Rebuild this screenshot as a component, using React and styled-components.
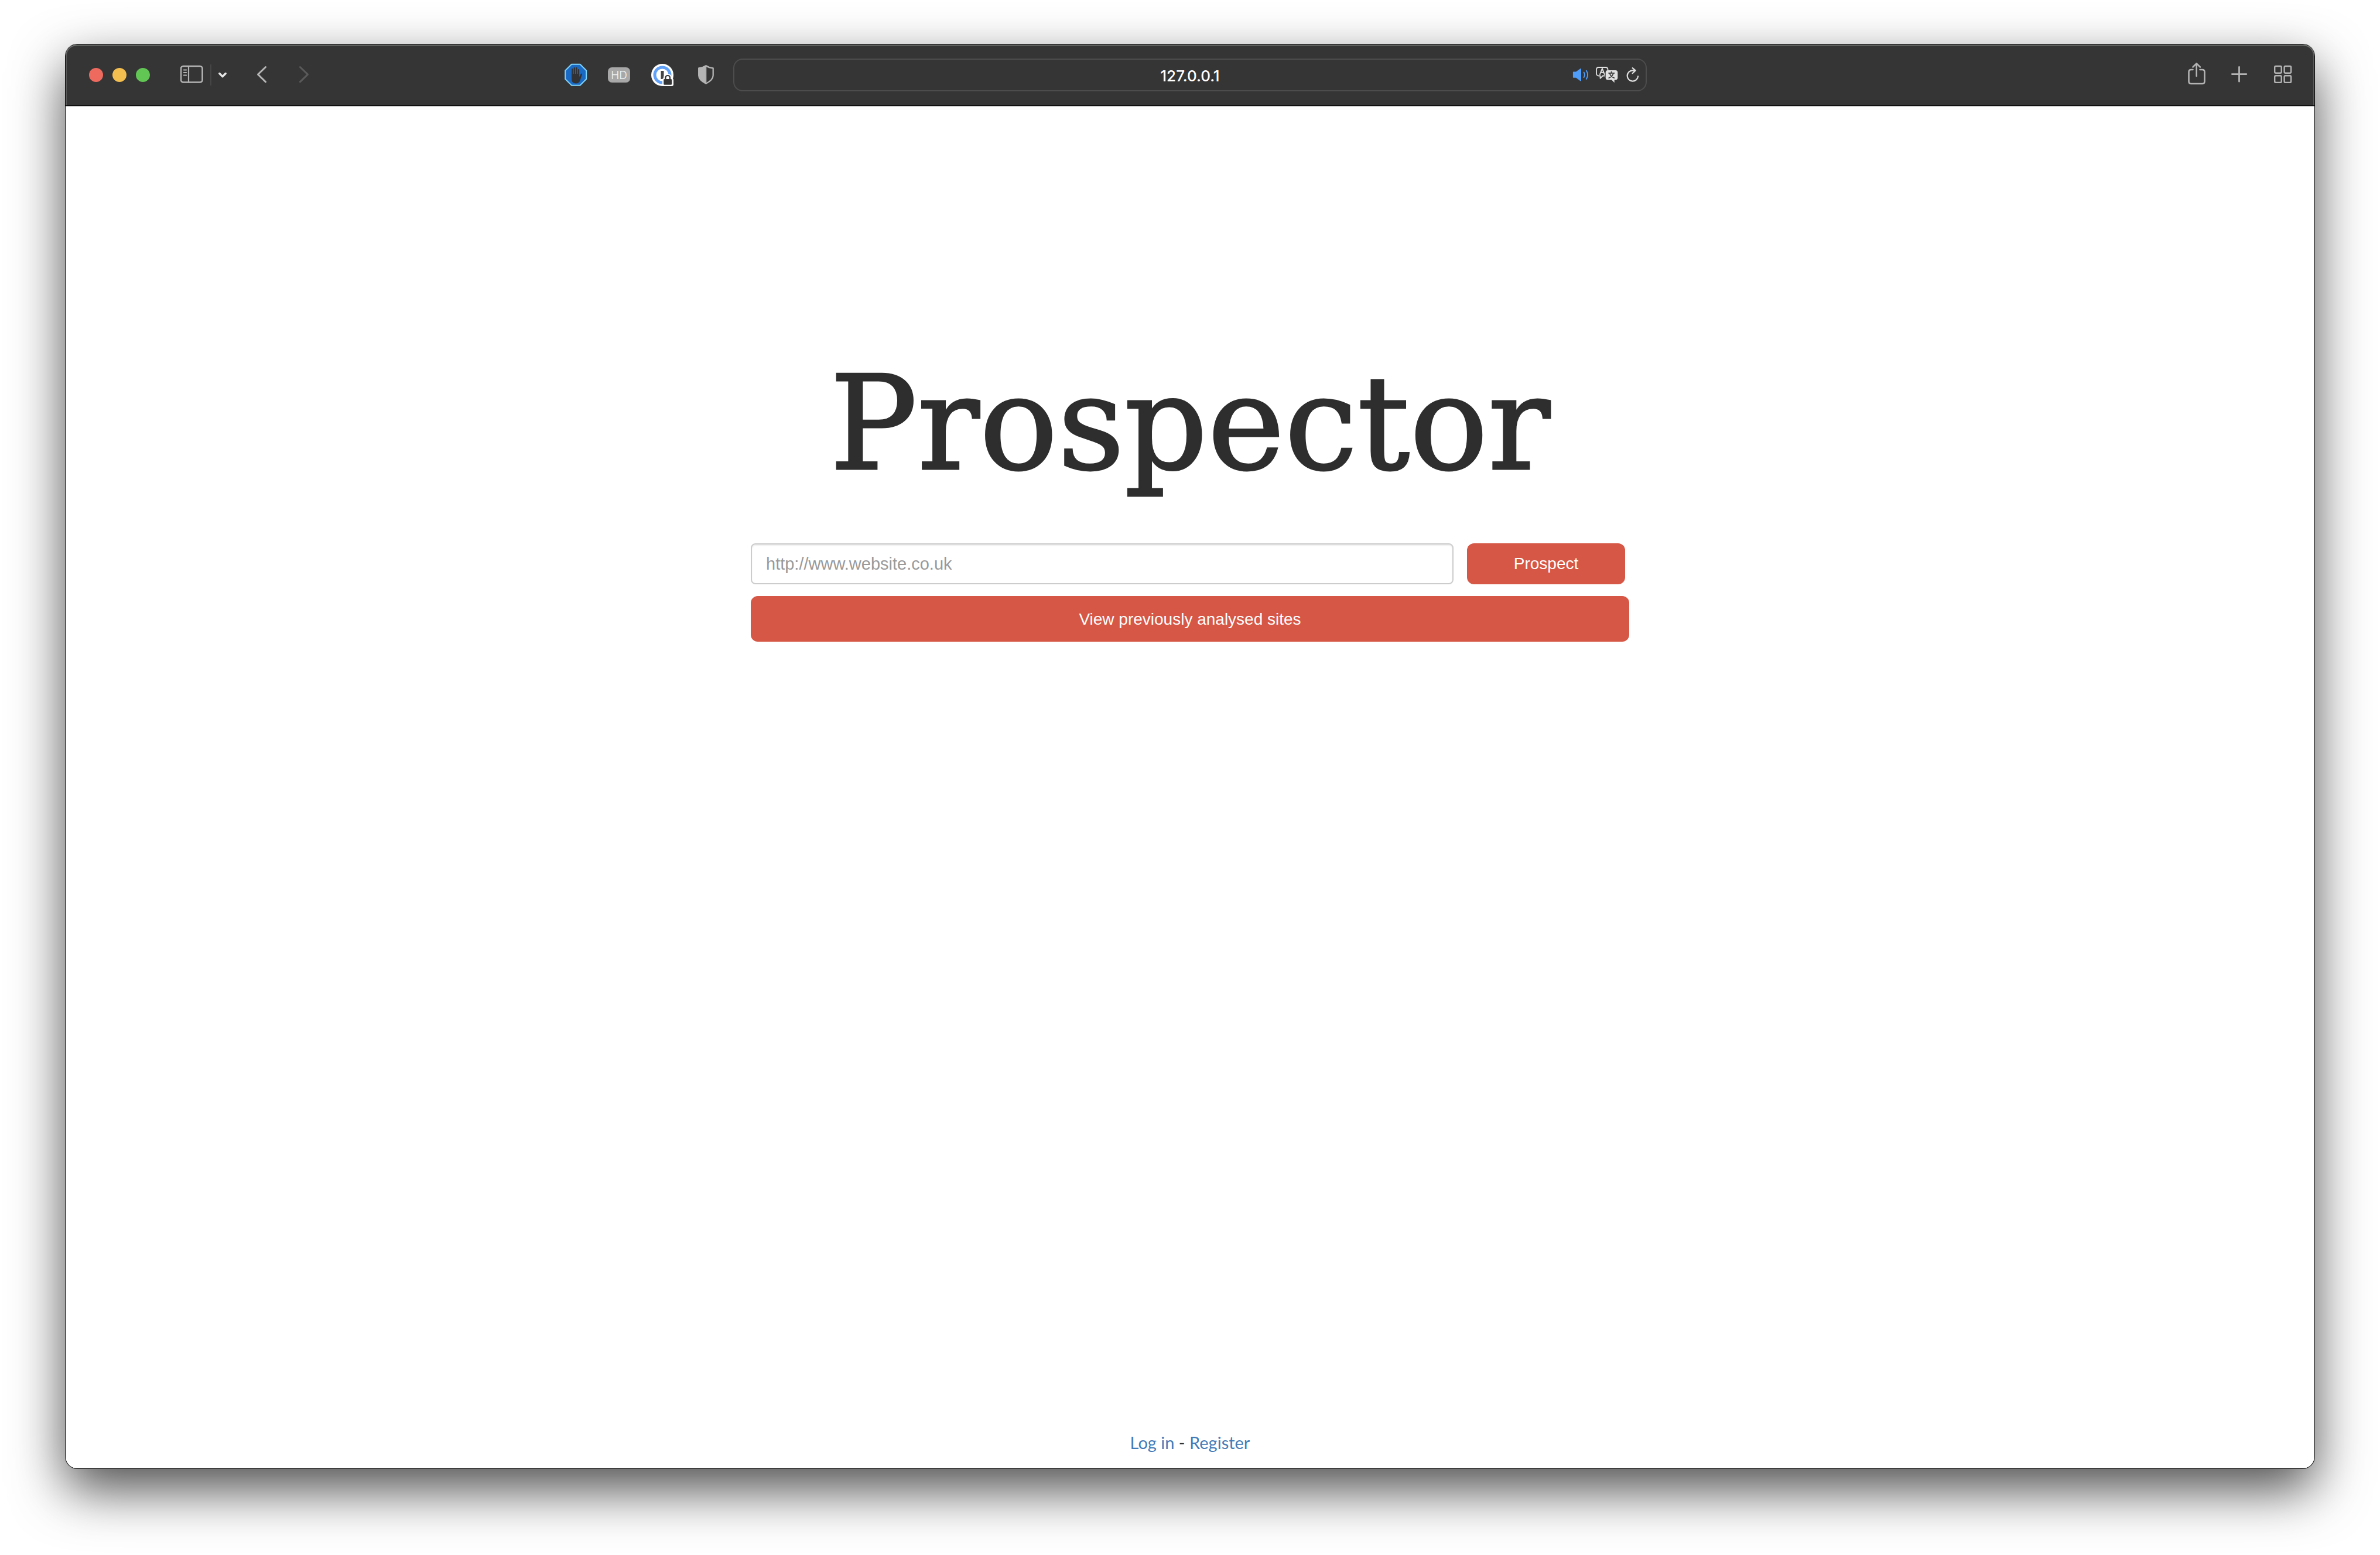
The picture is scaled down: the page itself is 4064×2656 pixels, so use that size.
import React from "react";
import styled, { createGlobalStyle } from "styled-components";

const GlobalStyle = createGlobalStyle`
  *, *::before, *::after { box-sizing: border-box; }
  body { margin: 0; background: #fff; }
`;

const sans = '"Liberation Sans", Arial, sans-serif';

const Desktop = styled.div`
  display: flex;
  min-height: 100vh;
  padding: 76px 112px 148px;
`;

const BrowserWindow = styled.div`
  flex: 1;
  display: flex;
  flex-direction: column;
  border-radius: 20px;
  background: #fff;
  box-shadow: 0 0 0 1px #000, 0 36px 90px rgba(0, 0, 0, 0.7);
`;

const Toolbar = styled.header`
  display: grid;
  grid-template-columns: 1fr minmax(0, 1560px) 1fr;
  align-items: center;
  height: 105px;
  border-bottom: 1px solid #000;
  border-radius: 20px 20px 0 0;
  background: #353535;
  box-shadow: inset 0 2px 0 #6c6e6c, inset 2px 0 0 #5c5c5c, inset -2px 0 0 #5c5c5c;
`;

const ToolbarStart = styled.div`
  display: flex;
  align-items: center;
  justify-content: space-between;
  padding: 0 27px 0 40px;
`;

const ToolbarEnd = styled.div`
  display: flex;
  justify-content: flex-end;
  gap: 34px;
  padding-right: 34px;
`;

const Group = styled.div`
  display: flex;
  align-items: center;
  gap: ${(p) => p.$gap}px;
`;

const WindowButton = styled.button`
  width: 24px;
  height: 24px;
  padding: 0;
  border: 0;
  border-radius: 50%;
  background: ${(p) => p.$color};
`;

const ToolButton = styled.button`
  display: flex;
  width: ${(p) => p.$width || 40}px;
  height: 48px;
  padding: 0;
  border: 0;
  background: none;
  color: ${(p) => p.$color || "#b4b4b4"};
`;

const Divider = styled.span`
  width: 2px;
  height: 36px;
  background: #464646;
`;

const AddressBar = styled.div`
  display: grid;
  grid-template-columns: 1fr 2fr 1fr;
  align-items: center;
  height: 56px;
  padding: 0 10px;
  border: 2px solid #4d4d4d;
  border-radius: 16px;
`;

const AddressInput = styled.input`
  grid-column: 2;
  width: 100%;
  padding: 4px 0 0;
  border: 0;
  outline: 0;
  background: none;
  color: #fff;
  font: 500 26px/32px Inter, sans-serif;
  text-align: center;
`;

const AddressActions = styled.div`
  display: flex;
  justify-content: flex-end;
  gap: 12px;
`;

const Page = styled.div`
  flex: 1;
  display: flex;
  flex-direction: column;
  align-items: center;
  justify-content: space-between;
  padding: 431px 40px 26px;
  border-top: 1px solid #b8b8b8;
  border-radius: 0 0 20px 20px;
`;

const Main = styled.main`
  display: flex;
  flex-direction: column;
  align-items: center;
  width: 100%;
`;

const Title = styled.h1`
  margin: 0 0 93px;
  color: #2e2e2e;
  font: 400 222px/222px "DejaVu Serif", serif;
  -webkit-text-stroke: 3px #2e2e2e;
`;

const SearchForm = styled.form`
  display: grid;
  grid-template-columns: 80% 18%;
  gap: 23px;
  width: 100%;
  max-width: 1500px;
`;

const UrlInput = styled.input`
  height: 70px;
  padding: 0 24px;
  border: 2px solid #ccc;
  border-radius: 8px;
  outline: 0;
  background: #fff;
  box-shadow: inset 0 2px 2px rgba(0, 0, 0, 0.075);
  font: 29px/40px ${sans};
  color: #555;

  &::placeholder {
    color: #999;
    opacity: 1;
  }
`;

const ActionButton = styled.button`
  height: 70px;
  padding: 0 24px;
  border: 0;
  border-radius: 12px;
  background: #d65745;
  color: #fff;
  font: 28px/40px ${sans};
`;

const WideButton = styled(ActionButton)`
  width: 100%;
  max-width: 1500px;
  height: 78px;
  margin-top: 20px;
  padding-top: 2px;
`;

const Footer = styled.footer`
  color: #333;
  font: 400 29px/36px Lato, sans-serif;
`;

const FooterLink = styled.a`
  color: #437bb8;
  text-decoration: none;
`;

const Icon = ({ width = 40, children, ...rest }) => (
  <svg
    width={width}
    height="48"
    viewBox={`0 0 ${width} 48`}
    fill="none"
    stroke="currentColor"
    strokeWidth="2.6"
    strokeLinecap="round"
    strokeLinejoin="round"
    aria-hidden="true"
    {...rest}
  >
    {children}
  </svg>
);

const SidebarIcon = () => (
  <Icon>
    <rect x="1" y="9" width="36.5" height="27.5" rx="4" />
    <path d="M14 9v27.5" strokeWidth="2.2" />
    <path d="M5.8 15.5h4.4M5.8 20h4.4M5.8 24.5h4.4" strokeWidth="1.8" />
  </Icon>
);

const ChevronDownIcon = () => (
  <Icon width={16} strokeWidth="3.4">
    <path d="M2.8 21.5 8 26.7l5.2-5.2" />
  </Icon>
);

const BackIcon = () => (
  <Icon width={24} strokeWidth="3">
    <path d="M17.6 10.500 4.5 23.2l13.1 12.6" />
  </Icon>
);

const ForwardIcon = () => (
  <Icon width={24} strokeWidth="3">
    <path d="M4.4 10.5 17.5 23.2 4.4 35.8" />
  </Icon>
);

const StopHandIcon = () => (
  <Icon>
    <path
      d="M13 5.8h14.500L38.2 16.5v14.5L27.5 41.7H13L2.2 31V16.5z"
      fill="#1a6ac4"
      stroke="#7fd4fb"
      strokeWidth="2"
    />
    <path
      d="M14.200 28V14.200M17.800 24V12M21.400 24V12.200M25 25V15"
      stroke="#303234"
      strokeWidth="2.2"
    />
    <path
      d="M13.1 22h13v5.500l2.500-5c.7-1.400 2.800-1.100 2.300.7L27.500 33.5c-1.200 3.500-3.500 5-7.200 5-4.500 0-7.200-2.800-7.200-7z"
      fill="#303234"
      stroke="none"
    />
  </Icon>
);

const HdIcon = () => (
  <Icon>
    <rect x="1" y="11" width="38" height="26" rx="7" fill="#a8a8a8" stroke="none" />
    <text
      x="20"
      y="31"
      textAnchor="middle"
      fill="#f4f4f4"
      stroke="none"
      fontFamily="Inter, sans-serif"
      fontSize="19"
      fontWeight="300"
    >
      HD
    </text>
  </Icon>
);

const PasswordIcon = () => (
  <Icon stroke="none">
    <circle cx="20" cy="24" r="19" fill="#fff" />
    <circle cx="20" cy="24" r="13" stroke="#62a1f8" strokeWidth="5" />
    <rect x="17.5" y="17" width="5" height="14" fill="#454545" />
    <path
      d="M22.5 43c-1.500 0-2.500-1-2.500-2.500v-8c0-1.500.7-2.400 1.800-2.900.3-4.600 3.300-7.300 7.400-7.300s7.100 2.700 7.400 7.300c1.400.5 2.400 1.500 2.400 2.900v8c0 1.500-1 2.500-2.500 2.500z"
      fill="#fff"
    />
    <rect x="22.2" y="31" width="14" height="9.800" rx="1.6" fill="#353535" />
    <path d="M25.4 32v-3.200a3.800 3.800 0 0 1 7.600 0V32" stroke="#353535" strokeWidth="2.2" />
  </Icon>
);

const ShieldIcon = () => (
  <Icon strokeWidth="2.3">
    <path d="M20.5 8.3c-3.800 2.600-7 3.700-12.300 4.200v12.300c0 6.400 5.500 10.500 12.300 14 6.800-3.500 12.200-7.600 12.200-14V12.500c-5.200-.5-8.400-1.600-12.200-4.200z" />
    <path
      d="M20.5 8.3c-3.800 2.600-7 3.700-12.300 4.200v12.300c0 6.400 5.500 10.500 12.300 14z"
      fill="currentColor"
      strokeWidth="1"
    />
  </Icon>
);

const SpeakerIcon = () => (
  <Icon width={28} strokeWidth="1.9">
    <path
      d="M2.5 18.5h4.600l7.300-5.300c.8-.6 1.600-.3 1.600.8v19.500c0 1.100-.8 1.400-1.600.8l-7.300-5.600H2.500c-.4 0-.6-.2-.6-.6v-9c0-.4.200-.6.600-.6z"
      fill="currentColor"
      stroke="none"
    />
    <path d="M20.6 19.500c1.600 2.700 1.600 6 0 8.600M24.800 16.800c2.800 4.400 2.800 9.800 0 14.200" />
  </Icon>
);

const TranslateIcon = () => (
  <Icon strokeWidth="1.8">
    <path d="M16 25.500h-3.200L8.500 29.800V25.500H6c-2.400 0-4-1.600-4-4V15c0-2.400 1.600-4 4-4h11.500c2.400 0 4 1.600 4 4v1" />
    <path d="m8 23 3.900-10 3.900 10M9.400 19.700h5" strokeWidth="2" />
    <path
      d="M21.5 16h13c2.400 0 3.800 1.400 3.800 3.800v9c0 2.400-1.400 3.800-3.800 3.800h-1.800v4.600L28 32.600h-6.500c-2.400 0-3.800-1.400-3.800-3.800v-9c0-2.400 1.400-3.800 3.800-3.800z"
      fill="currentColor"
      stroke="none"
    />
    <path
      d="M27.5 18.500v2M23 20.800h9.500M25 22.300c1 3 3.500 5.500 7.300 6.800M30.500 22.300c-1 3-3.500 5.500-7.300 6.800"
      stroke="#353535"
      strokeWidth="1.7"
    />
  </Icon>
);

const ReloadIcon = () => (
  <Icon width={24} strokeWidth="2.2">
    <path d="M21 26.300A9.200 9.200 0 1 1 11.600 16.300h4.600" />
    <path d="m11.6 12.200 5 4.200-5 4.800" />
  </Icon>
);

const ShareIcon = () => (
  <Icon>
    <path d="M14.5 15H11.5c-2.400 0-4 1.600-4 4v16c0 2.400 1.600 4 4 4h19c2.400 0 4-1.600 4-4V19c0-2.400-1.600-4-4-4h-4" />
    <path d="M20.7 26V4.800M14.500 10.500l6.200-6.200 6.200 6.200" />
  </Icon>
);

const PlusIcon = () => (
  <Icon strokeWidth="2.8">
    <path d="M19.5 10.400v24.800M7.300 22.600h24.600" />
  </Icon>
);

const TabsIcon = () => (
  <Icon strokeWidth="2.4">
    <rect x="6.2" y="9" width="11.5" height="11.7" rx="2" />
    <rect x="22.6" y="9" width="11.5" height="11.7" rx="2" />
    <rect x="6.2" y="25.2" width="11.5" height="11.7" rx="2" />
    <rect x="22.6" y="25.2" width="11.5" height="11.7" rx="2" />
  </Icon>
);

export default function App() {
  return (
    <>
      <GlobalStyle />
      <Desktop>
        <BrowserWindow>
          <Toolbar>
            <ToolbarStart>
              <Group $gap={48}>
                <Group $gap={52}>
                  <Group $gap={16}>
                    <WindowButton $color="#ee6a5f" aria-label="Close" />
                    <WindowButton $color="#f5bf4f" aria-label="Minimise" />
                    <WindowButton $color="#62c655" aria-label="Zoom" />
                  </Group>
                  <Group $gap={11}>
                    <ToolButton aria-label="Sidebar">
                      <SidebarIcon />
                    </ToolButton>
                    <Divider />
                    <ToolButton $width={16} $color="#e6e6e6" aria-label="Tab groups">
                      <ChevronDownIcon />
                    </ToolButton>
                  </Group>
                </Group>
                <ToolButton $width={24} aria-label="Back">
                  <BackIcon />
                </ToolButton>
                <ToolButton $width={24} $color="#5a5a5a" aria-label="Forward">
                  <ForwardIcon />
                </ToolButton>
              </Group>
              <Group $gap={34}>
                <ToolButton aria-label="Ad blocker">
                  <StopHandIcon />
                </ToolButton>
                <ToolButton aria-label="Video quality">
                  <HdIcon />
                </ToolButton>
                <ToolButton aria-label="Passwords">
                  <PasswordIcon />
                </ToolButton>
                <ToolButton aria-label="Privacy report">
                  <ShieldIcon />
                </ToolButton>
              </Group>
            </ToolbarStart>
            <AddressBar>
              <AddressInput aria-label="Address" defaultValue="127.0.0.1" />
              <AddressActions>
                <ToolButton $width={28} $color="#4f9df8" aria-label="Mute tab">
                  <SpeakerIcon />
                </ToolButton>
                <ToolButton $color="#e0e0e0" aria-label="Translate">
                  <TranslateIcon />
                </ToolButton>
                <ToolButton $width={24} $color="#dedede" aria-label="Reload">
                  <ReloadIcon />
                </ToolButton>
              </AddressActions>
            </AddressBar>
            <ToolbarEnd>
              <ToolButton aria-label="Share">
                <ShareIcon />
              </ToolButton>
              <ToolButton aria-label="New tab">
                <PlusIcon />
              </ToolButton>
              <ToolButton aria-label="Tab overview">
                <TabsIcon />
              </ToolButton>
            </ToolbarEnd>
          </Toolbar>
          <Page>
            <Main>
              <Title>Prospector</Title>
              <SearchForm onSubmit={(e) => e.preventDefault()}>
                <UrlInput type="url" aria-label="Website" placeholder="http://www.website.co.uk" />
                <ActionButton type="submit">Prospect</ActionButton>
              </SearchForm>
              <WideButton type="button">View previously analysed sites</WideButton>
            </Main>
            <Footer>
              <FooterLink href="#login">Log in</FooterLink> -{" "}
              <FooterLink href="#register">Register</FooterLink>
            </Footer>
          </Page>
        </BrowserWindow>
      </Desktop>
    </>
  );
}
